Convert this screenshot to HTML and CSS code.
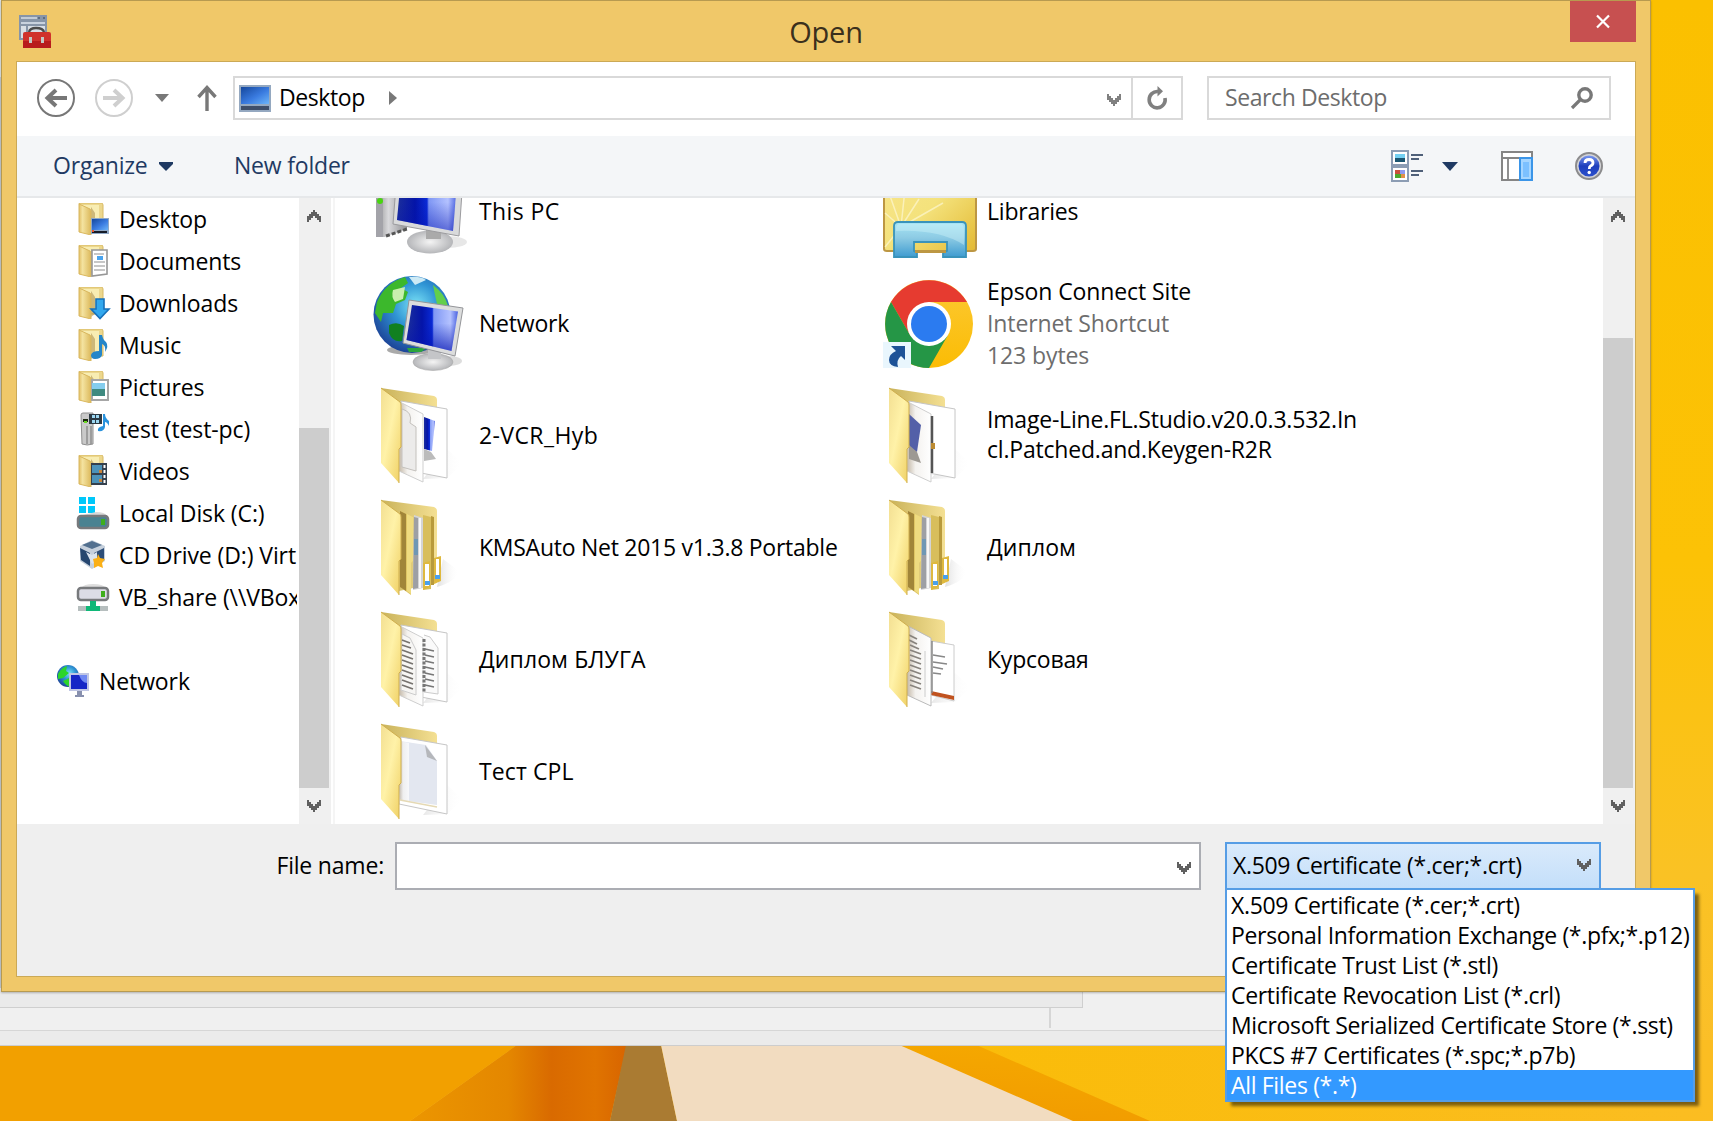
FILE: index.html
```html
<!DOCTYPE html>
<html lang="en">
<head>
<meta charset="utf-8">
<title>Open</title>
<link rel="stylesheet" href="styles.css">
</head>
<body>
<svg class="defs" width="0" height="0" aria-hidden="true">
  <defs>
    <linearGradient id="gFront" x1="0" y1="0" x2="1" y2="1"><stop offset="0" stop-color="#f3df92"/><stop offset=".45" stop-color="#fff2a8"/><stop offset="1" stop-color="#efcf62"/></linearGradient>
    <linearGradient id="gBack" x1="0" y1="0" x2="1" y2="0"><stop offset="0" stop-color="#c9b25a"/><stop offset="1" stop-color="#f4e093"/></linearGradient>
    <linearGradient id="gPage" x1="0" y1="0" x2="1" y2="0"><stop offset="0" stop-color="#c4b9a8"/><stop offset=".35" stop-color="#f4f2ef"/><stop offset="1" stop-color="#ffffff"/></linearGradient>
    <linearGradient id="gShade" x1="0" y1="0" x2="1" y2="0"><stop offset="0" stop-color="#bbb"/><stop offset="1" stop-color="#fff" stop-opacity="0"/></linearGradient>
    <linearGradient id="gScreen" x1="0" y1="0" x2="1" y2="0"><stop offset="0" stop-color="#1c2f9c"/><stop offset=".3" stop-color="#0414a8"/><stop offset=".5" stop-color="#0a2ad6"/><stop offset=".53" stop-color="#7f97f4"/><stop offset=".85" stop-color="#b4c2ff"/><stop offset="1" stop-color="#4a62e0"/></linearGradient>
    <linearGradient id="gScreenDark" x1="0" y1="0" x2="0" y2="1"><stop offset=".4" stop-color="#0614b0" stop-opacity="0"/><stop offset="1" stop-color="#0614b0"/></linearGradient>
    <linearGradient id="gMetal" x1="0" y1="0" x2="1" y2="0"><stop offset="0" stop-color="#8d8d8f"/><stop offset=".4" stop-color="#d9d9dc"/><stop offset="1" stop-color="#8f8f92"/></linearGradient>
    <radialGradient id="gBase"><stop offset="0" stop-color="#f4f4f4"/><stop offset="1" stop-color="#b5b6b9"/></radialGradient>
    <radialGradient id="gGlobe" cx=".55" cy=".38" r=".65"><stop offset="0" stop-color="#7be3f6"/><stop offset=".45" stop-color="#2f94d4"/><stop offset="1" stop-color="#1b3f94"/></radialGradient>
    <linearGradient id="gTile" x1="0" y1="0" x2="1" y2="1"><stop offset="0" stop-color="#15479c"/><stop offset=".55" stop-color="#3a7be0"/><stop offset="1" stop-color="#6cb4f8"/></linearGradient>
    <linearGradient id="gLib" x1="0" y1="0" x2="1" y2="1"><stop offset="0" stop-color="#f8e58c"/><stop offset=".5" stop-color="#f4e27c"/><stop offset="1" stop-color="#e3b932"/></linearGradient>
    <linearGradient id="gHolder" x1="0" y1="0" x2="0" y2="1"><stop offset="0" stop-color="#a9e6f5"/><stop offset=".45" stop-color="#8dcbe4"/><stop offset="1" stop-color="#3f9bd0"/></linearGradient>
    <linearGradient id="gSmall" x1="0" y1="0" x2="1" y2="0"><stop offset="0" stop-color="#e2c069"/><stop offset=".3" stop-color="#f4e3a0"/><stop offset="1" stop-color="#dcb95c"/></linearGradient>
    <linearGradient id="gHelp" x1="0" y1="0" x2="0" y2="1"><stop offset="0" stop-color="#7a98f0"/><stop offset=".5" stop-color="#1d3fbc"/><stop offset="1" stop-color="#2c50cc"/></linearGradient>
    <linearGradient id="gYellow" x1="0" y1="0" x2="0" y2="1"><stop offset="0" stop-color="#fcc934"/><stop offset="1" stop-color="#fbbc04"/></linearGradient>

    <symbol id="folderBack" viewBox="0 0 96 96">
      <path d="M52 92 L76 62 L92 77 L76 91 Z" fill="url(#gShade)" opacity=".35"/>
      <path d="M10 1 L63 9 Q66 10 66 13 V60 H28 Z" fill="url(#gBack)"/>
    </symbol>
    <symbol id="folderPages" viewBox="0 0 96 96">
      <path d="M30 14 L76 22 V91 L50 86 Z" fill="#fff" stroke="#c6c6c6"/>
      <path d="M29 15 L52 27 V95 L28 84 Z" fill="url(#gPage)" stroke="#cfcfcf"/>
    </symbol>
    <symbol id="folderFront" viewBox="0 0 96 96">
      <path d="M10 1 L29 15 Q30 16 30 18 V60 L28 62 V96 L10 76 Z" fill="url(#gFront)"/>
      <path d="M10 1 L29 15 Q30 16 30 18 V60 L28 62 V96" fill="none" stroke="#cfae4e"/>
    </symbol>
    <symbol id="folderNested" viewBox="0 0 96 96">
      <path d="M66 88 L72 60 L88 72 Q86 82 66 88 Z" fill="url(#gShade)" opacity=".45"/>
      <path d="M10 1 L63 8 Q66 9 66 12 V84 L28 92 Z" fill="url(#gBack)"/>
      <path d="M52 16 L60 18 V90 L52 91 Z" fill="#d8be5c"/>
      <path d="M60 17 L63 18 V86 H60 Z" fill="#b89a3c"/>
      <path d="M43 16 L52 19 V89 L42 91 Z" fill="#d4d4d6"/><path d="M43 18 L47 19 V89 L42 90 Z" fill="#9d9fa4"/>
      <path d="M43 40 h4 v16 h-4z" fill="#6f97b4"/><path d="M49 19 V89" stroke="#f7f7f7" stroke-width="2"/>
      <path d="M29 12 L42 18 V62 L40 64 V96 L29 88 Z" fill="#dfc564"/><path d="M29 12 L35 15 V92 L29 88 Z" fill="#a18539"/>
      <path d="M36 15 L42 18 V62 L40 64 V95 L36 92 Z" fill="#efdb80"/>
      <path d="M52 64 L59 62 V88 L52 91 Z M63 59 L70 57 V82 L63 85 Z" fill="#dfb93f"/>
      <path d="M54 65 h4 v22 h-4z M65 60 h3 v20 h-3z" fill="#fff"/><path d="M54 82 h5 v4 h-5z M64 76 h5 v4 h-5z" fill="#4aa0ea"/>
    </symbol>
    <symbol id="smallFolder" viewBox="0 0 32 32">
      <path d="M2 0 H24 Q26 0 26 2 V27 H12 Z" fill="#ecd78d" stroke="#d8b962" stroke-width="1"/>
      <path d="M5 2 H22 V26 H8 Z" fill="#f8edb2"/><path d="M14 4 L18 10 V27 L14 30 Z" fill="#a98c48" opacity=".55"/>
      <path d="M2 1 L13 6 Q14 7 14 9 V32 L2 29 Z" fill="url(#gSmall)" stroke="#d9b75e" stroke-width="1"/>
    </symbol>
    <symbol id="chevDown" viewBox="0 0 14 12"><path d="M0 0 H2 V2 H4 V4 H6 V6 H8 V4 H10 V2 H12 V0 H14 V6 H12 V8 H10 V10 H8 V12 H6 V10 H4 V8 H2 V6 H0 Z"/></symbol>
    <symbol id="chevUp" viewBox="0 0 14 12"><path d="M0 12 H2 V10 H4 V8 H6 V6 H8 V8 H10 V10 H12 V12 H14 V6 H12 V4 H10 V2 H8 V0 H6 V2 H4 V4 H2 V6 H0 Z"/></symbol>
  </defs>
</svg>

<div class="desktop">
  <svg class="wallpaper" viewBox="0 0 1713 1121" aria-hidden="true">
    <defs>
      <linearGradient id="wRight" x1="0" y1="0" x2="0" y2="1"><stop offset="0" stop-color="#fbc000"/><stop offset=".5" stop-color="#fcc206"/><stop offset=".78" stop-color="#fac224"/><stop offset="1" stop-color="#fbbd2a"/></linearGradient>
      <linearGradient id="wYellow" x1="0" y1="0" x2="1" y2="0"><stop offset="0" stop-color="#fabc06"/><stop offset="1" stop-color="#fbbd22"/></linearGradient>
      <linearGradient id="wDeep" x1="0" y1="0" x2="1" y2="0"><stop offset="0" stop-color="#ec9600"/><stop offset=".45" stop-color="#e48700"/><stop offset=".65" stop-color="#d96a00"/><stop offset=".85" stop-color="#e07400"/><stop offset="1" stop-color="#d86400"/></linearGradient>
      <linearGradient id="wFold" x1="0" y1="1" x2=".25" y2="0"><stop offset="0" stop-color="#f19a00"/><stop offset="1" stop-color="#f5a800"/></linearGradient>
    </defs>
    <rect width="1713" height="1121" fill="url(#wRight)"/>
    <path d="M900 1040 H1713 V1121 H900Z" fill="url(#wYellow)"/>
    <path d="M0 1040 H524 L410 1121 H0Z" fill="#f2a000"/>
    <path d="M524 1040 H628 L610 1121 H410Z" fill="url(#wDeep)"/>
    <path d="M627 1040 H660 L677 1121 H610Z" fill="#aa7b32"/>
    <path d="M660 1040 H890 L1075 1121 H677Z" fill="#f2dcc0"/>
    <path d="M888 1040 H965 L1150 1121 H1073Z" fill="url(#wFold)"/>
  </svg>

  <div class="console">
    <div class="console-pane"></div>
    <div class="console-status"><i></i></div>
    <div class="console-edge"></div>
  </div>

  <div class="dialog">
    <header class="titlebar">
      <svg class="app-icon" width="34" height="34" viewBox="0 0 34 34"><path d="M1 1h28v25H1z" fill="#8795a8"/><path d="M3 3h16v2H3z" fill="#c3ccd6"/><path d="M20 3h2v2h-2zM25 3h2v2h-2z" fill="#5d6c80"/><path d="M3 8h24v2H3z" fill="#c9d2de"/><path d="M3 12h5v12H3zM10 12h17v12H10z" fill="#d9dfe6"/><path d="M11 18 Q12 14 18 14 Q25 14 26 18" fill="none" stroke="#4c4c4c" stroke-width="2.500"/><path d="M5 20 Q5 18 7 18 H31 Q33 18 33 20 V34 H5z" fill="#d0322b"/><path d="M5 27h28v7H5z" fill="#b81c1c"/><path d="M11 23h3v6h-3zM23 23h3v6h-3z" fill="#c3c9c4"/></svg>
      <h1 class="title">Open</h1>
      <button class="close"><svg width="14" height="13" viewBox="0 0 14 13"><path d="M1 .5 L13 12.500 M13 .5 L1 12.500" stroke="#fff" stroke-width="2.200"/></svg></button>
    </header>

    <div class="client">
      <nav class="navbar">
        <svg class="nav-btn" width="40" height="40" viewBox="0 0 40 40"><circle cx="20" cy="20" r="18" fill="none" stroke="#777" stroke-width="2"/><path d="M31 20 H12 M20 12 L11.500 20 L20 28" fill="none" stroke="#777" stroke-width="4"/></svg>
        <svg class="nav-btn" width="40" height="40" viewBox="0 0 40 40"><circle cx="20" cy="20" r="18" fill="none" stroke="#cfcfcf" stroke-width="2"/><path d="M9 20 H28 M20 12 L28.500 20 L20 28" fill="none" stroke="#cfcfcf" stroke-width="4"/></svg>
        <svg class="nav-caret" width="14" height="8" viewBox="0 0 14 8"><path d="M0 0H14L7 8Z" fill="#787878"/></svg>
        <svg class="nav-up" width="20" height="26" viewBox="0 0 20 26"><path d="M10 26 V3 M1.500 12 L10 2.500 L18.500 12" fill="none" stroke="#787878" stroke-width="3.400"/></svg>
        <div class="address">
          <svg width="32" height="27" viewBox="0 0 32 27"><path d="M0 0H32V27H0z" fill="#94a8c0"/><path d="M2 2H30V19H2z" fill="url(#gTile)"/><path d="M2 21H30V25H2z" fill="#3f4f6a"/></svg>
          <span class="crumb">Desktop</span>
          <svg class="crumb-arrow" width="8" height="14" viewBox="0 0 8 14"><path d="M0 0 L8 7 L0 14Z" fill="#787878"/></svg>
          <svg class="addr-chev" width="14" height="12"><use href="#chevDown"/></svg>
          <span class="refresh"><svg width="20" height="24" viewBox="0 0 20 24"><path d="M11 5.500 A8 8.200 0 1 0 18 12" fill="none" stroke="#808080" stroke-width="3.600"/><path d="M10.500 0 L16 5.200 L10.500 10.500 Z" fill="#808080"/></svg></span>
        </div>
        <div class="search">
          <span>Search Desktop</span>
          <svg width="22" height="22" viewBox="0 0 22 22"><circle cx="14" cy="8" r="6.200" fill="none" stroke="#787878" stroke-width="3.400"/><path d="M9.500 12.500 L1 21" stroke="#787878" stroke-width="3.200"/></svg>
        </div>
      </nav>

      <div class="commands">
        <span class="cmd organize">Organize</span>
        <svg class="cmd-caret" width="14" height="9" viewBox="0 0 14 9"><path d="M0 0H14V2L7 9L0 2Z" fill="#1f3a63"/></svg>
        <span class="cmd new-folder">New folder</span>
        <svg class="view-icon" width="33" height="32" viewBox="0 0 33 32"><path d="M1 1H17V15H1zM1 17H17V31H1z" fill="#fff" stroke="#8c9db4" stroke-width="2"/><path d="M4 4h10v4H4z" fill="#74d0f2"/><path d="M4 8h10v4H4z" fill="#1c5570"/><path d="M4 20h5v4H4z" fill="#c9503b"/><path d="M9 20h5v4H9z" fill="#8f9af0"/><path d="M4 24h6v4H4z" fill="#4da82c"/><path d="M10 24h4v4h-4z" fill="#e0904a"/><path d="M20 4h12v2H20zM20 8h8v2h-8zM20 20h12v2H20zM20 24h8v2h-8z" fill="#4f6079"/></svg>
        <svg class="view-caret" width="16" height="9" viewBox="0 0 16 9"><path d="M0 0H16L8 9Z" fill="#1f3a63"/></svg>
        <svg class="pane-icon" width="32" height="30" viewBox="0 0 32 30"><path d="M1 1H31V29H1z" fill="#fff" stroke="#858585" stroke-width="2"/><path d="M1 7H31 M7 7V29" stroke="#858585" stroke-width="1.800"/><path d="M19 7H31V29H19z" fill="#a5d5ff" stroke="#3b95e8" stroke-width="2"/><path d="M22 11h6v15h-6z" fill="#7cc0ff"/></svg>
        <svg class="help-icon" width="28" height="28" viewBox="0 0 28 28"><circle cx="14" cy="14" r="13" fill="#d3d3d6" stroke="#8b8b8d" stroke-width="2"/><circle cx="14" cy="14" r="10.500" fill="url(#gHelp)"/><path d="M10 11 Q10 7.500 14 7.500 Q18 7.500 18 10.800 Q18 13 15.500 14 Q14.300 14.700 14.300 17" fill="none" stroke="#fff" stroke-width="2.800"/><circle cx="14.200" cy="20.500" r="1.700" fill="#fff"/></svg>
      </div>

      <main class="browser">
        <ul class="tree">
          <li><svg class="ico" viewBox="0 0 32 32"><use href="#smallFolder"/><path d="M14 15H32V31H14z" fill="#8fa8c6"/><path d="M15 16H31V27H15z" fill="url(#gTile)"/><path d="M15 28H30V30H15z" fill="#151b28"/><path d="M15 27h2v2h-2z" fill="#e8542c"/></svg>Desktop</li>
          <li><svg class="ico" viewBox="0 0 32 32"><use href="#smallFolder"/><path d="M15 5H30V29L15 31z" fill="#fff" stroke="#979797" stroke-width="1.600"/><path d="M17 9H27M17 17H28M17 21H28M17 25H28" stroke="#b5b5b5" stroke-width="1.400"/><path d="M20 11h6v4h-6z" fill="#4aa4ee"/></svg>Documents</li>
          <li><svg class="ico" viewBox="0 0 32 32"><use href="#smallFolder"/><path d="M19 12H27V22H32L23 31.500L14 22H19Z" fill="#32a8ee" stroke="#1771ba" stroke-width="1.600"/></svg>Downloads</li>
          <li><svg class="ico" viewBox="0 0 32 32"><use href="#smallFolder"/><path d="M22 6 H25 Q26 11 29 13 Q32 17 28 23 Q29 16 25 15 V26 Q24 30 18 30 Q14 30 14 26 Q15 22 22 22Z" fill="#2586c9"/></svg>Music</li>
          <li><svg class="ico" viewBox="0 0 32 32"><use href="#smallFolder"/><path d="M15 9H31V29H15z" fill="#fff" stroke="#a6a6a6" stroke-width="2"/><path d="M15 12H28V18H15z" fill="#84cdee"/><path d="M15 18H28V25H15z" fill="#3f8a80"/></svg>Pictures</li>
          <li><svg class="ico" viewBox="0 0 32 32"><path d="M4 2Q4 0 6 0H16V31Q10 33 5 31Z" fill="#c9c9c9" stroke="#909090"/><path d="M10 13V31M14 13V31" stroke="#8f8f8f" stroke-width="1.500"/><path d="M6 6h5v3H6z" fill="#1c2a10"/><path d="M7 8h3v2H7z" fill="#69d820"/><path d="M12 1H25V11H12z" fill="#2c3a44"/><path d="M15 2H18V5H15zM19 2H22V5H19zM15 7H18V10H15zM19 7H22V10H19z" fill="#9cd7f2"/><path d="M26 1H28Q28 5 32 8V13Q30 9 28 9V14Q27 19 21 18Q20 14 26 13z" fill="#2a93dd"/></svg>test (test-pc)</li>
          <li><svg class="ico" viewBox="0 0 32 32"><use href="#smallFolder"/><path d="M14 8H30V30H14z" fill="#35404d"/><path d="M15 10H25V18H15zM15 20H25V28H15z" fill="#4c93ba"/><path d="M22 15h3v3h-3zM22 24h3v3h-3z" fill="#c9853a"/><path d="M26.500 10h2v3h-2zM26.500 15h2v3h-2zM26.500 20h2v3h-2zM26.500 25h2v3h-2z" fill="#fff"/></svg>Videos</li>
          <li><svg class="ico" viewBox="0 0 32 32"><path d="M2 0H9V7H2zM11 0H18V7H11zM2 9H9V16H2zM11 9H18V16H11z" fill="#00c8fa"/><path d="M19 15 Q28 15 30 19H2" fill="#d8d8d8"/><rect x="1" y="19" width="30" height="12" rx="3" fill="#4a8291" stroke="#77797c" stroke-width="2.500"/><path d="M24 22h4v6h-4z" fill="#3fae1d"/></svg>Local Disk (C:)</li>
          <li><svg class="ico" viewBox="0 0 32 32"><path d="M15 1L28 7V22L15 30L3 22V7Z" fill="#c6d0dc"/><path d="M15 2L25 6L15 10L5 6Z" fill="#52708f"/><path d="M3 9L13 14V27L4 21Z" fill="#25466f"/><path d="M17 14L27 9V21L17 27Z" fill="#2d4e78"/><path d="M9 13L15 16L20 13V22L15 25Z" fill="#dbe4ee"/><path d="M21 15L23 19L28 20L25 24L26 29L21 27L17 29L17 24L16 20L20 19Z" fill="#fbb016"/></svg>CD Drive (D:) Virt</li>
          <li><svg class="ico" viewBox="0 0 32 32"><path d="M4 7 Q7 3 16 3 Q26 3 29 7Z" fill="#dedede"/><rect x="1" y="7" width="30" height="12" rx="3" fill="#dcdce6" stroke="#77797c" stroke-width="2.500"/><path d="M24 10h4v6h-4z" fill="#3fae1d"/><path d="M1 25H31V30H1z" fill="#b6bebe"/><path d="M13 20H19V25H23V30H9V25H13Z" fill="#10b878"/></svg>VB_share (\\VBox</li>
          <li class="root"><svg class="ico" viewBox="0 0 32 32"><circle cx="11" cy="11" r="11" fill="url(#gGlobe)"/><path d="M1 9Q5 2 10 1L9 6L12 8L6 13L1 14Z M6 16L12 13L13 22Q9 21 6 16Z" fill="#2cd52a"/><path d="M12 8H32V26H12z" fill="#c0c6e4"/><path d="M14 10H30V24H14z" fill="#1526c6"/><path d="M22 10H30V18Q25 18 22 10" fill="#6f88f2"/><path d="M20 26H25V30H27V32H18V30H20z" fill="#8890ae"/></svg>Network</li>
        </ul>
        <div class="scroll side"><svg width="14" height="12"><use href="#chevUp"/></svg><span class="thumb"></span><svg width="14" height="12"><use href="#chevDown"/></svg></div>
        <div class="divider"></div>

        <div class="files">
          <div class="grid">
            <div class="file"><svg class="big" viewBox="0 0 96 96"><path d="M5 20 H36 V66 L14 74 L5 74 Z" fill="url(#gMetal)"/><path d="M5 30H12V74H5z" fill="#a3a3a9"/><circle cx="9" cy="38" r="3" fill="#48d510"/><path d="M15 73 L36 66" stroke="#555" stroke-width="3" stroke-dasharray="4 2"/><ellipse cx="76" cy="79" rx="20" ry="6" fill="#ddd" opacity=".7"/><ellipse cx="59" cy="79" rx="23" ry="11.500" fill="url(#gBase)"/><path d="M55 64H70V76H55z" fill="#aaa"/><path d="M26 10 L92 14 L88 73 L22 61Z" fill="#d9dadb" stroke="#9b9b9e"/><path d="M30 14 L86 18 L82 68 L26 57Z" fill="url(#gScreen)"/><path d="M26 57 L82 68 L86 25 L30 20Z" fill="url(#gScreenDark)" opacity=".5"/></svg><p class="loose">This PC</p></div>
            <div class="file"><svg class="big" viewBox="0 0 96 96"><path d="M5 0H97V86Q97 88 94 88H8Q5 88 5 86Z" fill="url(#gLib)" stroke="#bd9743" stroke-width="2"/><path d="M22 64 L10 30 M22 64 L26 26 M22 64 L40 36 M22 64 L64 40 M22 64 L6 50 M22 64 L6 84" stroke="#fffbe0" stroke-width="1.500" opacity=".6"/><path d="M15 94V63Q15 59 19 59H83Q87 59 87 63V94H64V90L68 88V79H35V88L38 90V94Z" fill="url(#gHolder)" stroke="#3993bb" stroke-width="1.800"/><path d="M36 89H67" stroke="#bd9743" stroke-width="2"/><path d="M17 88V66Q17 61 21 61H81Q85 61 85 66V82Q60 66 17 68" fill="#d2f4fb" opacity=".4"/></svg><p>Libraries</p></div>

            <div class="file"><svg class="big" viewBox="0 0 96 96"><ellipse cx="40" cy="75" rx="24" ry="5" fill="#555" opacity=".5"/><circle cx="41" cy="39.500" r="38.500" fill="url(#gGlobe)"/><path d="M6 27 Q14 8 34 2 L37 8 L30 13 L37 17 L34 25 L25 29 L22 38 L12 38 L10 47 L4 38Z" fill="#3cb82c"/><path d="M22 15 L34 12 L32 24 L24 27 Q20 22 22 15Z" fill="#c9efae"/><path d="M18 50 Q26 46 33 51 L31 66 Q22 68 18 58Z" fill="#118020"/><path d="M62 10 Q74 19 77 31 L66 29 L64 20Z" fill="#62cf4c"/><path d="M38 2 Q50 1 55 5 L44 10Z" fill="#cdeaf5"/><path d="M36 73 L56 73 L50 77 L38 77Z" fill="#2ba43c"/><ellipse cx="78" cy="86" rx="13" ry="5" fill="#bbb" opacity=".5"/><ellipse cx="62" cy="87" rx="20" ry="8.500" fill="url(#gBase)" stroke="#aaa" stroke-width=".6"/><path d="M57 72H70V84H57z" fill="#c4c5c8"/><path d="M38 25 L92 33 L84 81 L32 68Z" fill="#dcdddd" stroke="#949599"/><path d="M41 30 L87 36.500 L80.500 76 L35.500 65Z" fill="url(#gScreen)"/><path d="M35.500 65 L80.500 76 L87 36.500 L41 30Z" fill="url(#gScreenDark)" opacity=".7"/></svg><p>Network</p></div>
            <div class="file"><svg class="big" viewBox="0 0 96 96"><circle cx="50" cy="49" r="44" fill="url(#gYellow)"/><path d="M12 27 A44 44 0 0 1 88 27 H50 L31 60Z" fill="#e63b30"/><path d="M12 27 A44 44 0 0 0 50 93 L69 60 L50 71 L31 60Z" fill="#259646"/><circle cx="50" cy="49" r="22" fill="#fff"/><circle cx="50" cy="49" r="18" fill="#2b7bf0"/><path d="M4 67H32V93H4z" fill="#e9f6fd"/><path d="M12 71H26V85L22 81Q17 85 19 92Q10 91 10 85Q10 79 17 76Z" fill="#1d5297"/></svg><p>Epson Connect Site<small>Internet Shortcut</small><small>123 bytes</small></p></div>

            <div class="file"><svg class="big" viewBox="0 0 96 96"><use href="#folderBack"/><use href="#folderPages"/><path d="M53 30 L64 34 L61 64 L53 62Z" fill="url(#gScreen)"/><path d="M53 62 L60 65 L65 72 L53 74Z" fill="#bbb"/><path d="M31 22 Q42 25 39 36 L45 40 V84 L31 80Z" fill="#ecebea" stroke="#c4c1bd"/><use href="#folderFront"/></svg><p class="loose">2-VCR_Hyb</p></div>
            <div class="file"><svg class="big" viewBox="0 0 96 96"><use href="#folderBack"/><use href="#folderPages"/><path d="M30 27 L42 38 L38 65 L30 60Z" fill="#5360a8"/><path d="M30 58 L38 65 L42 76 L30 72Z" fill="#9d9993"/><path d="M53 29V86" stroke="#555" stroke-width="2.500"/><path d="M52 56h4v6h-4z" fill="#bc8b32"/><use href="#folderFront"/></svg><p class="wrapped">Image-Line.FL.Studio.v20.0.3.532.In<br>cl.Patched.and.Keygen-R2R</p></div>

            <div class="file"><svg class="big" viewBox="0 0 96 96"><use href="#folderNested"/><use href="#folderFront"/></svg><p class="tight">KMSAuto Net 2015 v1.3.8 Portable</p></div>
            <div class="file"><svg class="big" viewBox="0 0 96 96"><use href="#folderNested"/><use href="#folderFront"/></svg><p class="cyr">Диплом</p></div>

            <div class="file"><svg class="big" viewBox="0 0 96 96"><use href="#folderBack"/><use href="#folderPages"/><path d="M31 23 L39 27 L45 39 V84 L30 79Z" fill="#f7f6f4" stroke="#ccc"/><path d="M31 29l8 3M31 34l9 3M31 39l11 4M31 44l11 4M31 49l11 4M31 54l11 4M31 59l11 4M31 64l11 4M31 69l11 4M31 74l11 4" stroke="#77736f" stroke-width="1.800"/><path d="M53 24 L59 26 L67 37 V83 L53 81" fill="#fafafa" stroke="#ccc"/><path d="M53 28V82" stroke="#777" stroke-width="3" stroke-dasharray="3 1.500"/><path d="M54 38l9 2M54 44l9 2M54 50l9 2M54 56l9 2M54 62l9 2M54 68l9 2M54 74l9 2" stroke="#777" stroke-width="1.700"/><use href="#folderFront"/></svg><p class="cyr">Диплом БЛУГА</p></div>
            <div class="file"><svg class="big" viewBox="0 0 96 96"><use href="#folderBack"/><path d="M52 30 L75 34 V90 L52 84Z" fill="#fff" stroke="#ccc"/><path d="M52 80 L75 85 V89 L52 84Z" fill="#c0521f"/><path d="M54 44l12 2M54 51l14 2M54 56l10 2M54 62l8 1" stroke="#888" stroke-width="1.600"/><path d="M29 15 L52 27 V95 L28 84 Z" fill="url(#gPage)" stroke="#bbb"/><path d="M30 24l8 4M30 29l8 4M31 34l9 4M31 39l11 4M31 44l11 4M31 49l11 4M31 54l11 4M31 59l11 4M31 64l11 4M31 69l11 4M31 74l11 4" stroke="#88837d" stroke-width="1.800"/><path d="M46 40V86" stroke="#ccc"/><path d="M53 30V82" stroke="#888" stroke-width="1.500"/><use href="#folderFront"/></svg><p>Курсовая</p></div>

            <div class="file"><svg class="big" viewBox="0 0 96 96"><use href="#folderBack"/><path d="M30 14 L76 22 V91 L28 81 Z" fill="#fff" stroke="#c6c6c6"/><path d="M29 18 L55 22 L66 38 V82 L29 77Z" fill="#e3e7f0"/><path d="M29 18 L38 20 V78 L29 77Z" fill="url(#gPage)" opacity=".7"/><path d="M54 22 L56 34 L66 38Z" fill="#b5b7bb"/><path d="M29 77L66 84" stroke="#e5d9b4" stroke-width="1.500"/><use href="#folderFront"/></svg><p class="cyr">Тест CPL</p></div>
          </div>
        </div>
        <div class="scroll main"><svg width="14" height="12"><use href="#chevUp"/></svg><span class="thumb"></span><svg width="14" height="12"><use href="#chevDown"/></svg></div>
      </main>

      <footer class="bottom">
        <label>File name:</label>
        <div class="field"><svg width="14" height="12"><use href="#chevDown"/></svg></div>
        <div class="combo"><span>X.509 Certificate (*.cer;*.crt)</span><svg width="14" height="12"><use href="#chevDown"/></svg>
          <ul class="menu">
            <li>X.509 Certificate (*.cer;*.crt)</li>
            <li>Personal Information Exchange (*.pfx;*.p12)</li>
            <li>Certificate Trust List (*.stl)</li>
            <li>Certificate Revocation List (*.crl)</li>
            <li>Microsoft Serialized Certificate Store (*.sst)</li>
            <li>PKCS #7 Certificates (*.spc;*.p7b)</li>
            <li class="selected">All Files (*.*)</li>
          </ul>
        </div>
      </footer>
    </div>
  </div>
</div>
</body>
</html>
```

FILE: styles.css
```css
* { box-sizing: border-box; }
html, body { margin: 0; height: 100%; overflow: hidden; }
body { font-family: "Open Sans", "Noto Sans", sans-serif; font-size: 23px; font-stretch: 92%; letter-spacing: -0.2px; color: #000; }
ul { list-style: none; margin: 0; padding: 0; }
p, h1 { margin: 0; }
svg { display: block; flex: none; overflow: visible; }
.defs { position: absolute; }

.desktop { position: relative; width: 1713px; height: 1121px; overflow: hidden; }
.wallpaper { position: absolute; left: 0; top: 0; width: 1713px; height: 1121px; }

/* console window behind the dialog */
.console { position: absolute; left: 0; top: 0; width: 1300px; height: 1046px; background: #f0f0f0; border-bottom: 1px solid #cdcdcd; display: flex; flex-direction: column; }
.console-pane { width: 1083px; height: 1008px; background: linear-gradient(#dfe5e8 77px, #c6cbd1 77px, #c6cbd1 988px, #eaeaea 988px); border: solid #cfcfcf; border-width: 0 1px 1px 0; }
.console-status { height: 22px; width: 1051px; }
.console-status i { display: block; margin-left: auto; width: 2px; height: 20px; background: #d6d6d6; }
.console-edge { flex: 1; background: #ebebeb; border-top: 1px solid #d6d6d6; }

.dialog { position: absolute; left: 1px; top: 0; width: 1650px; height: 992px; background: #f0c869; border: 1px solid #b79a50; box-shadow: 0 1px 2px rgba(0,0,0,.25); padding: 0 14px 14px; display: flex; flex-direction: column; }
.titlebar { flex: none; height: 60px; display: grid; grid-template-columns: 66px 1fr 66px; }
.app-icon { margin: 13px 0 0 2px; }
.title { font-size: 29px; font-weight: 400; line-height: 62px; text-align: center; color: #3b301c; }
.close { width: 66px; height: 41px; border: 0; padding: 0 0 1px; background: #c75050; display: flex; align-items: center; justify-content: center; }

.client { flex: 1; border: 1px solid #cba956; background: #efefef; display: flex; flex-direction: column; }

.navbar { height: 74px; flex: none; background: #fff; display: flex; align-items: center; padding: 0 24px 2px 19px; }
.nav-btn + .nav-btn { margin-left: 18px; }
.nav-caret { margin-left: 21px; }
.nav-up { margin-left: 28px; }
.address { margin-left: 16px; width: 950px; height: 44px; border: 2px solid #d9d9d9; display: flex; align-items: center; padding-left: 4px; }
.crumb { margin-left: 8px; padding-bottom: 2px; letter-spacing: -0.4px; }
.crumb-arrow { margin-left: 24px; }
.addr-chev { margin: 4px 10px 0 auto; fill: #808080; }
.refresh { width: 50px; height: 100%; border-left: 2px solid #d9d9d9; display: flex; align-items: center; justify-content: center; }
.search { margin-left: 24px; width: 404px; height: 44px; border: 2px solid #d9d9d9; display: flex; align-items: center; justify-content: space-between; padding: 0 16px; color: #6d6d6d; letter-spacing: -0.4px; }
.search span { padding-bottom: 2px; }

.commands { height: 62px; flex: none; background: #f4f6f8; border-bottom: 2px solid #e6e8ea; display: flex; align-items: center; padding: 0 32px 0 36px; color: #1f3a63; }
.cmd { padding-bottom: 2px; }
.organize { width: 106px; }
.new-folder { margin-left: 61px; }
.view-icon { margin-left: auto; }
.view-caret { margin-left: 18px; }
.pane-icon { margin-left: 43px; }
.help-icon { margin-left: 42px; }

.browser { height: 626px; flex: none; background: #fff; display: flex; }
.tree { width: 280px; overflow: hidden; white-space: nowrap; letter-spacing: -0.1px; }
.tree li { height: 42px; padding-left: 60px; display: flex; align-items: center; gap: 10px; }
.tree .root { padding-left: 40px; margin-top: 42px; }
.ico { width: 32px; height: 32px; }

.scroll { flex: none; width: 32px; background: #f0f0f0; display: flex; flex-direction: column; fill: #606060; padding: 12px 0; }
.scroll svg { margin-left: 8px; }
.scroll .thumb { width: 30px; background: #cdcdcd; margin-bottom: 12px; }
.side { margin-left: 2px; }
.side .thumb { height: 363px; margin-top: 206px; }
.main .thumb { height: 453px; margin-top: 116px; }
.divider { flex: none; width: 4px; border-right: 2px solid #f5f5f5; }

.files { flex: 1; overflow: hidden; }
.grid { margin-top: -43px; padding-left: 36px; display: grid; grid-template-columns: 508px 508px; grid-auto-rows: 112px; }
.file { display: flex; align-items: center; gap: 12px; white-space: nowrap; line-height: 30px; }
.file small { display: block; font-size: inherit; line-height: 32px; color: #6d6d6d; }
.file p:has(small) { line-height: 32px; letter-spacing: -0.1px; }
.file .loose { letter-spacing: 0.4px; }
.file .tight { letter-spacing: -0.26px; }
.file .wrapped { padding-bottom: 2px; }
.file .cyr { letter-spacing: 0.1px; }
.big { width: 96px; height: 96px; }

.bottom { display: flex; padding-top: 18px; }
.bottom label { width: 378px; padding-right: 11px; text-align: right; line-height: 46px; }
.field { width: 806px; height: 48px; background: #fff; border: 2px solid #abadb3; display: flex; align-items: center; justify-content: flex-end; padding: 3px 8px 0 0; fill: #606060; }
.combo { position: relative; margin-left: 24px; width: 376px; height: 48px; border: 2px solid #569de5; background: linear-gradient(#daeafb, #c4dffa); display: flex; align-items: center; justify-content: space-between; padding: 0 8px 2px 6px; fill: #606060; letter-spacing: -0.33px; }
.menu { position: absolute; left: -2px; top: 44px; width: 470px; height: 214px; border: 2px solid #569de5; background: #fff; box-shadow: 5px 5px 3px -1px rgba(0,0,0,.5); }
.menu li { height: 30px; line-height: 30px; padding-left: 4px; white-space: nowrap; }
.menu .selected { background: #3399ff; color: #fff; }
```
